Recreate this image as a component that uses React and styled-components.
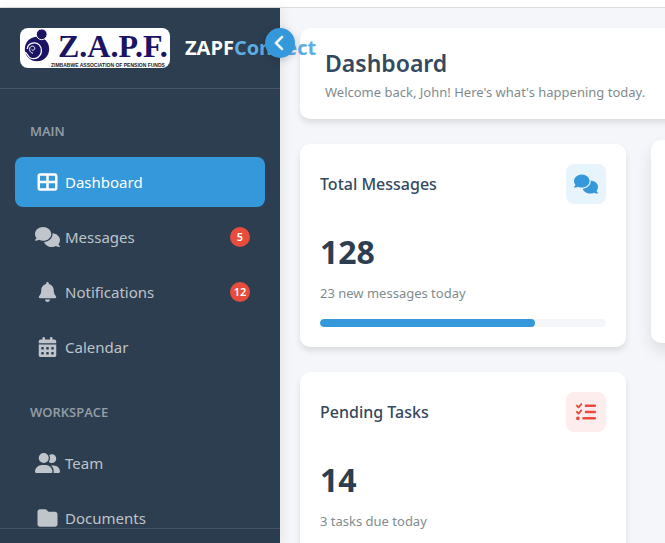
import React from "react";
import styled, { createGlobalStyle } from "styled-components";
import {
  FaTableCellsLarge,
  FaComments,
  FaBell,
  FaCalendarDays,
  FaUserGroup,
  FaFolder,
  FaListCheck,
  FaChevronLeft,
} from "react-icons/fa6";

const GlobalStyle = createGlobalStyle`
  * { box-sizing: border-box; }
  body {
    margin: 0;
    overflow: hidden;
    background: #f5f6fa;
    color: #2c3e50;
    font-family: "Segoe UI", "Noto Sans", "Open Sans", sans-serif;
  }
  h1, h2, h3, p, ul { margin: 0; padding: 0; }
`;

const Page = styled.div`
  display: grid;
  grid-template-rows: 8px minmax(0, 1fr);
  grid-template-columns: 280px minmax(0, 1fr);
  height: 100vh;
  overflow: hidden;
`;

const TopStrip = styled.div`
  grid-column: 1 / -1;
  background: #ffffff;
  border-bottom: 1px solid #dddddd;
`;

const Sidebar = styled.aside`
  position: relative;
  z-index: 2;
  display: flex;
  flex-direction: column;
  min-height: 0;
  background: #2c3e50;
  box-shadow: 4px 0 10px rgba(0, 0, 0, 0.06);
`;

const Brand = styled.header`
  display: flex;
  align-items: center;
  gap: 15px;
  flex: none;
  padding: 20px;
  border-bottom: 1px solid rgba(255, 255, 255, 0.12);
`;

const Logo = styled.svg`
  display: block;
  flex: none;
  width: 150px;
  height: 40px;
  border-radius: 8px;
  background: #ffffff;
`;

const BrandName = styled.span`
  color: #ffffff;
  font-family: "Segoe UI", "Open Sans", sans-serif;
  font-size: 20px;
  font-weight: 700;
  line-height: 28px;
  white-space: nowrap;
`;

const BrandAccent = styled.span`
  color: #5dade2;
`;

const Toggle = styled.button`
  position: absolute;
  top: 20px;
  right: -15px;
  display: flex;
  align-items: center;
  justify-content: center;
  width: 30px;
  height: 30px;
  padding: 0;
  border: 0;
  border-radius: 50%;
  background: #3498db;
  color: #ffffff;
  font-size: 16px;
  box-shadow: 0 2px 8px rgba(0, 0, 0, 0.2);
  cursor: pointer;

  path {
    stroke: currentColor;
    stroke-width: 20px;
  }
`;

const Nav = styled.nav`
  display: flex;
  flex-direction: column;
  flex: 1;
  gap: 30px;
  min-height: 0;
  padding: 32px 15px 0;
  overflow: hidden;
`;

const NavHeading = styled.h3`
  padding: 0 15px;
  margin-bottom: 16px;
  color: rgba(255, 255, 255, 0.5);
  font-family: "Segoe UI", "Open Sans", sans-serif;
  font-size: 13px;
  font-weight: 600;
  line-height: 20px;
`;

const NavList = styled.ul`
  display: grid;
  gap: 5px;
  list-style: none;
`;

const NavLink = styled.a`
  display: flex;
  align-items: center;
  gap: 5px;
  height: 50px;
  padding: 0 15px 0 20px;
  border-radius: 8px;
  background: ${(p) => (p.$active ? "#3498db" : "transparent")};
  color: ${(p) => (p.$active ? "#ffffff" : "rgba(255, 255, 255, 0.7)")};
  font-size: 15px;
  line-height: 24px;
  text-decoration: none;
`;

const NavIcon = styled.span`
  display: flex;
  justify-content: center;
  flex: none;
  width: 25px;

  svg {
    flex: none;
    width: 25px;
    height: 20px;
  }
`;

const Badge = styled.span`
  display: flex;
  align-items: center;
  justify-content: center;
  width: 20px;
  height: 20px;
  margin-left: auto;
  border-radius: 50%;
  background: #e74c3c;
  color: #ffffff;
  font-size: 11px;
  font-weight: 600;
`;

const SidebarFooter = styled.footer`
  flex: none;
  height: 15px;
  border-top: 1px solid rgba(255, 255, 255, 0.12);
  background: #2b3c4e;
`;

const Main = styled.main`
  display: grid;
  grid-template-columns: repeat(2, minmax(326px, 1fr));
  align-content: start;
  gap: 25px;
  min-height: 0;
  padding: 20px;
`;

const Panel = styled.section`
  border-radius: 10px;
  background: #ffffff;
  box-shadow: 0 4px 6px rgba(0, 0, 0, 0.1);
`;

const PageHeader = styled(Panel)`
  grid-column: 1 / -1;
  padding: 17px 25px 16px;
`;

const PageTitle = styled.h1`
  color: #34495e;
  font-size: 23px;
  font-weight: 600;
  line-height: 36px;
`;

const Muted = styled.p`
  color: #7f8c8d;
  font-size: 13px;
  line-height: 22px;
  white-space: nowrap;
`;

const Card = styled(Panel)`
  min-height: 203px;
  padding: 20px;
  transform: ${(p) => (p.$raised ? "translateY(-4px)" : "none")};
  box-shadow: ${(p) =>
    p.$raised ? "0 8px 15px rgba(0, 0, 0, 0.1)" : "0 4px 6px rgba(0, 0, 0, 0.1)"};
`;

const CardHead = styled.div`
  display: flex;
  align-items: center;
  justify-content: space-between;
  margin-bottom: 24px;
`;

const CardTitle = styled.h2`
  color: #34495e;
  font-size: 16px;
  font-weight: 500;
  line-height: 24px;
`;

const CardIcon = styled.span`
  display: flex;
  align-items: center;
  justify-content: center;
  width: 40px;
  height: 40px;
  border-radius: 8px;
  background: ${(p) => p.$tint};
  color: ${(p) => p.$color};

  svg {
    flex: none;
    width: 24px;
    height: 20px;
  }
`;

const Figure = styled.p`
  margin-bottom: 6px;
  color: #2c3e50;
  font-family: "Segoe UI", "Open Sans", sans-serif;
  font-size: 32px;
  font-weight: 700;
  line-height: 48px;
`;

const Progress = styled.div`
  height: 8px;
  margin-top: 15px;
  overflow: hidden;
  border-radius: 4px;
  background: #f5f6fa;
`;

const ProgressFill = styled.div`
  height: 100%;
  border-radius: 4px;
  background: ${(p) => p.$color};
`;

const sections = [
  {
    heading: "MAIN",
    items: [
      { label: "Dashboard", icon: FaTableCellsLarge, active: true },
      { label: "Messages", icon: FaComments, badge: 5 },
      { label: "Notifications", icon: FaBell, badge: 12 },
      { label: "Calendar", icon: FaCalendarDays },
    ],
  },
  {
    heading: "WORKSPACE",
    items: [
      { label: "Team", icon: FaUserGroup },
      { label: "Documents", icon: FaFolder },
    ],
  },
];

const cards = [
  {
    title: "Total Messages",
    value: 128,
    note: "23 new messages today",
    icon: FaComments,
    color: "#3498db",
    tint: "#e8f4fc",
    progress: 75,
  },
  { raised: true },
  {
    title: "Pending Tasks",
    value: 14,
    note: "3 tasks due today",
    icon: FaListCheck,
    color: "#e74c3c",
    tint: "#fdedec",
    progress: 45,
  },
];

function ZapfLogo() {
  return (
    <Logo viewBox="0 0 150 40" role="img" aria-label="Z.A.P.F.">
      <circle cx="17" cy="21" r="12.2" fill="#1b1464" />
      <circle cx="21.7" cy="6.3" r="5.4" fill="#1b1464" stroke="#fff" strokeWidth="1" />
      <path
        d="M5 24.5 C7.5 24.5 7.2 28.5 10.5 30 C15.5 32.2 21.4 28.5 21.4 22.6 C21.4 17.8 18 14.8 14.2 14.8 C10.4 14.8 7.4 17.4 7.2 21"
        fill="none"
        stroke="#fff"
        strokeWidth="1.3"
      />
      <path
        d="M10 19.6 C11 17.6 14.6 17.6 14.8 20.2 C14.8 22.4 12.4 22.8 11.6 21.4 M9.8 19.6 C9 22.4 10.4 25 13 25.2"
        fill="none"
        stroke="#fff"
        strokeWidth="1"
      />
      <text x="38" y="29" fill="#1b1464" fontFamily="Liberation Serif, serif" fontWeight="700" fontSize="32">
        Z.A.P.F.
      </text>
      <text x="31" y="39" fill="#222" fontFamily="Liberation Sans, sans-serif" fontWeight="700" fontSize="5">
        ZIMBABWE ASSOCIATION OF PENSION FUNDS
      </text>
    </Logo>
  );
}

function NavSection({ heading, items }) {
  return (
    <section>
      <NavHeading>{heading}</NavHeading>
      <NavList>
        {items.map(({ label, icon: Icon, active, badge }) => (
          <li key={label}>
            <NavLink href="#" $active={active} aria-current={active ? "page" : undefined}>
              <NavIcon><Icon /></NavIcon>
              {label}
              {badge && <Badge>{badge}</Badge>}
            </NavLink>
          </li>
        ))}
      </NavList>
    </section>
  );
}

function StatCard({ title, value, note, icon: Icon, color, tint, progress }) {
  return (
    <Card>
      <CardHead>
        <CardTitle>{title}</CardTitle>
        <CardIcon $color={color} $tint={tint}><Icon /></CardIcon>
      </CardHead>
      <Figure>{value}</Figure>
      <Muted>{note}</Muted>
      <Progress>
        <ProgressFill $color={color} style={{ width: `${progress}%` }} />
      </Progress>
    </Card>
  );
}

export default function App() {
  return (
    <>
      <GlobalStyle />
      <Page>
        <TopStrip />
        <Sidebar>
          <Brand>
            <ZapfLogo />
            <BrandName>ZAPF<BrandAccent>Connect</BrandAccent></BrandName>
          </Brand>
          <Toggle type="button" aria-label="Collapse sidebar"><FaChevronLeft /></Toggle>
          <Nav>
            {sections.map((s) => <NavSection key={s.heading} {...s} />)}
          </Nav>
          <SidebarFooter />
        </Sidebar>
        <Main>
          <PageHeader>
            <PageTitle>Dashboard</PageTitle>
            <Muted>Welcome back, John! Here's what's happening today.</Muted>
          </PageHeader>
          {cards.map((c, i) => (c.raised ? <Card key={i} $raised /> : <StatCard key={i} {...c} />))}
        </Main>
      </Page>
    </>
  );
}
